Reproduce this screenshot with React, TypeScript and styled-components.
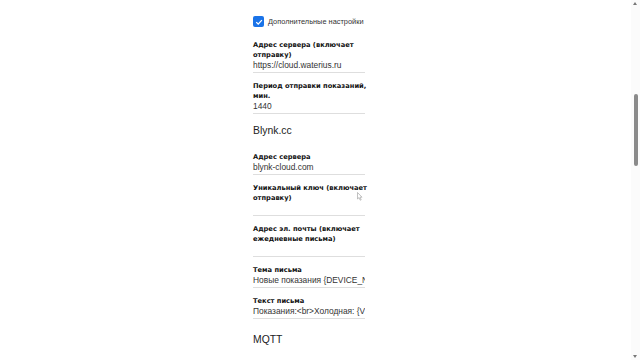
import React from "react";
import styled, { createGlobalStyle } from "styled-components";

const GlobalStyle = createGlobalStyle`
    html, body {
        margin: 0;
        padding: 0;
        background: #ffffff;
        font-family: "Liberation Sans", Arial, sans-serif;
        overflow: hidden;
    }
`;

const Page = styled.div`
    width: 640px;
    height: 360px;
    position: relative;
    overflow: hidden;
`;

const Form = styled.div`
    width: 112px;
    padding: 16px 0 0 253px;
    display: flex;
    flex-direction: column;
`;

const CheckRow = styled.label`
    display: flex;
    align-items: center;
    gap: 4px;
    height: 11px;
    margin-bottom: 13px;
    font-size: 7.4px;
    color: #333;
    white-space: nowrap;
`;

const CheckBox = styled.span`
    width: 11px;
    height: 11px;
    border-radius: 2px;
    background: #1a73e8;
    display: flex;
    align-items: center;
    justify-content: center;
    flex-shrink: 0;
`;

const Field = styled.div`
    display: flex;
    flex-direction: column;
    margin-bottom: 8px;
`;

const Label = styled.div`
    width: 120px;
    font-family: "DejaVu Sans", Verdana, sans-serif;
    font-size: 6.7px;
    font-weight: bold;
    line-height: 10px;
    color: #111;
`;

const Input = styled.input`
    width: 112px;
    height: 10px;
    padding: 0 0 2px 0;
    margin: 0;
    border: none;
    border-bottom: 1px solid #dedede;
    font-family: "Liberation Sans", Arial, sans-serif;
    font-size: 8.4px;
    color: #333;
    background: transparent;
    outline: none;
    box-sizing: content-box;
`;

const Heading = styled.div<{ $top: number; $bottom: number }>`
    font-size: 10.4px;
    color: #222;
    line-height: 14px;
    margin-top: ${p => p.$top}px;
    margin-bottom: ${p => p.$bottom}px;
`;

const Scrollbar = styled.div`
    position: absolute;
    top: 0;
    right: 0;
    width: 9px;
    height: 360px;
    background: #fbfbfb;
`;

const Arrow = styled.div<{ $down?: boolean }>`
    position: absolute;
    left: 2px;
    ${p => (p.$down ? "bottom: 2px;" : "top: 2px;")}
    width: 0;
    height: 0;
    border-left: 2.5px solid transparent;
    border-right: 2.5px solid transparent;
    ${p => (p.$down ? "border-top: 3px solid #777;" : "border-bottom: 3px solid #777;")}
`;

const Thumb = styled.div`
    position: absolute;
    top: 94px;
    left: 3px;
    width: 4px;
    height: 72px;
    border-radius: 2px;
    background: #8a8a8a;
`;

const Cursor = styled.svg`
    position: absolute;
    left: 357px;
    top: 192px;
`;

const fields = [
    { label: "Адрес сервера (включает отправку)", value: "https://cloud.waterius.ru" },
    { label: "Период отправки показаний, мин.", value: "1440" },
];

const blynk = [
    { label: "Адрес сервера", value: "blynk-cloud.com" },
    { label: "Уникальный ключ (включает отправку)", value: "" },
    { label: "Адрес эл. почты (включает ежедневные письма)", value: "" },
    { label: "Тема письма", value: "Новые показания {DEVICE_NAME}" },
    { label: "Текст письма", value: "Показания:<br>Холодная: {V1}" },
];

const App = () => {
    return (
        <Page>
            <GlobalStyle />
            <Form>
                <CheckRow>
                    <CheckBox>
                        <svg width="8" height="8" viewBox="0 0 10 10">
                            <path d="M1.5 5.2 L4 7.6 L8.6 2.6" stroke="#fff" strokeWidth="1.6" fill="none" />
                        </svg>
                    </CheckBox>
                    Дополнительные настройки
                </CheckRow>
                {fields.map(f => (
                    <Field key={f.label}>
                        <Label>{f.label}</Label>
                        <Input defaultValue={f.value} readOnly />
                    </Field>
                ))}
                <Heading $top={2} $bottom={14}>Blynk.cc</Heading>
                {blynk.map(f => (
                    <Field key={f.label}>
                        <Label>{f.label}</Label>
                        <Input defaultValue={f.value} readOnly />
                    </Field>
                ))}
                <Heading $top={6} $bottom={0}>MQTT</Heading>
            </Form>
            <Scrollbar>
                <Arrow />
                <Thumb />
                <Arrow $down />
            </Scrollbar>
            <Cursor width="6" height="9" viewBox="0 0 6 9">
                <path d="M0.5 0.5 L0.5 7 L2 5.6 L3.2 8.2 L4.2 7.8 L3 5.2 L5 5.2 Z" fill="#fff" stroke="#999" strokeWidth="0.6" />
            </Cursor>
        </Page>
    );
};

export default App;
